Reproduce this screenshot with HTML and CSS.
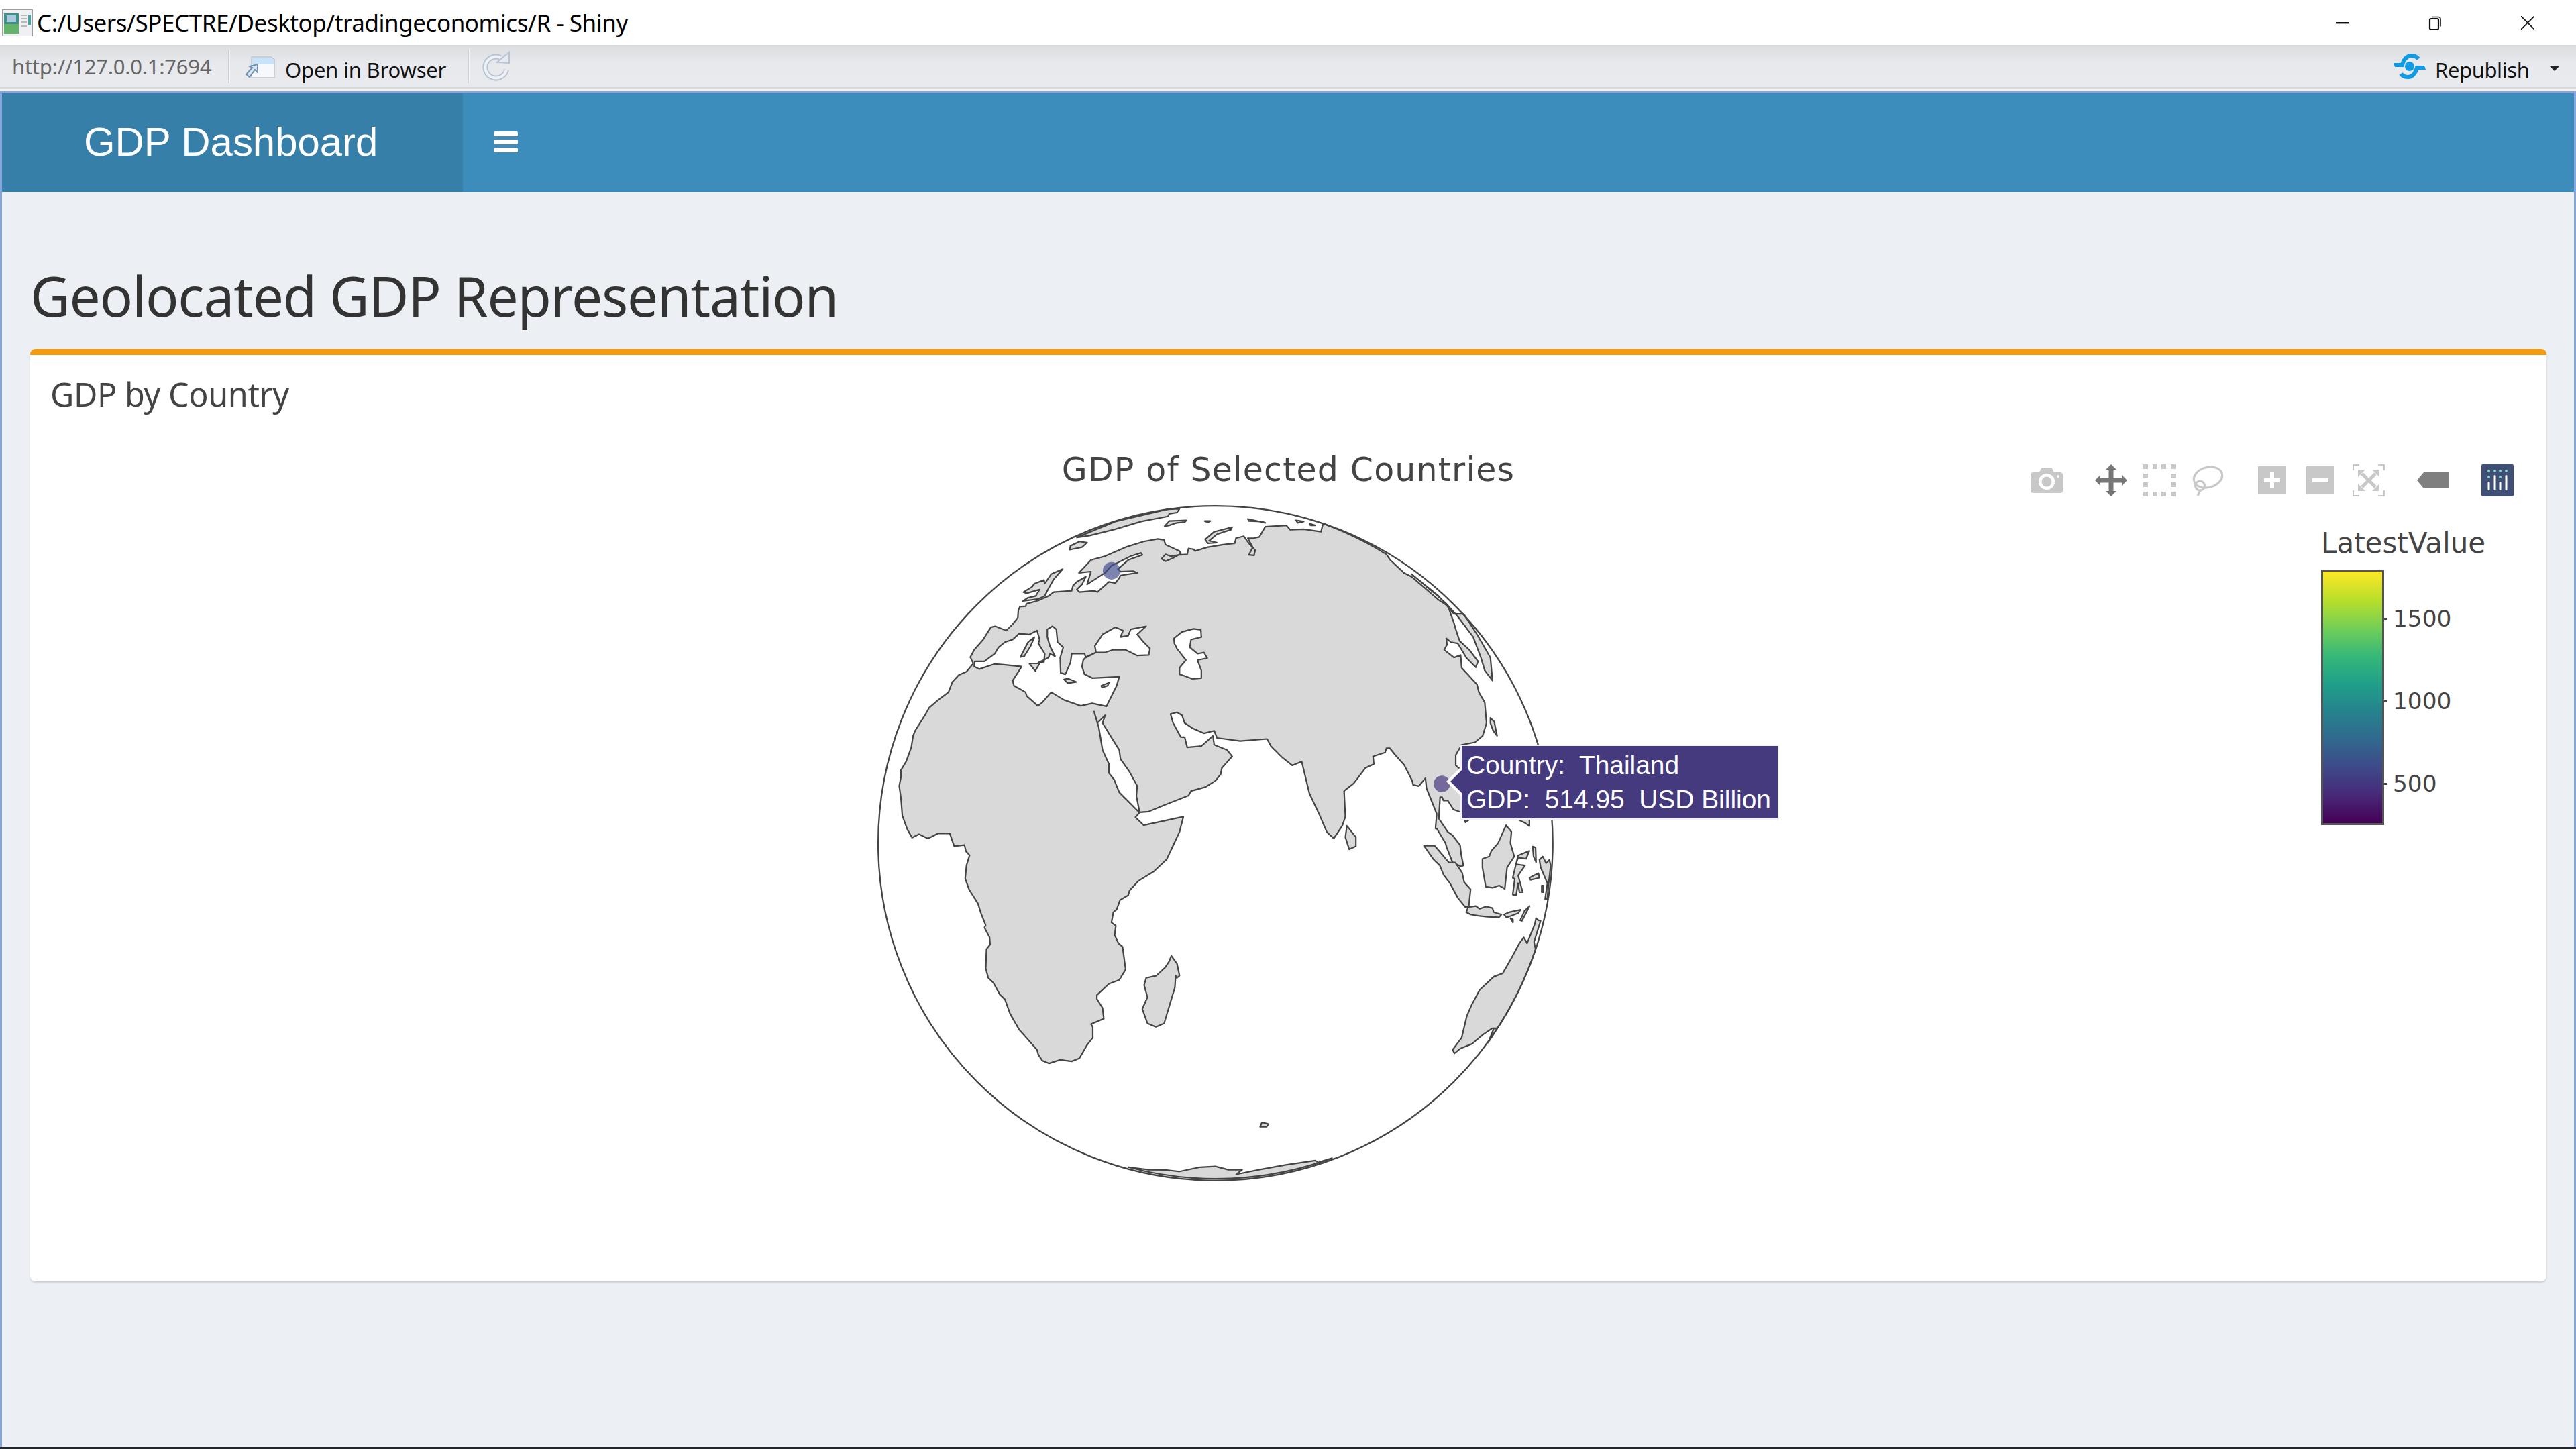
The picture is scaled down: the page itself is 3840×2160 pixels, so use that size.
FILE: index.html
```html
<!DOCTYPE html>
<html lang="en">
<head>
<meta charset="utf-8">
<title>GDP Dashboard</title>
<link rel="stylesheet" href="styles.css">
</head>
<body>
<div class="window">
  <header class="titlebar">
    <svg class="app-icon" viewBox="0 0 46 40"><rect x=".5" y=".5" width="45" height="39" fill="#eef0f2" stroke="#9a9fa5"/><rect x="3" y="6" width="22" height="30" fill="#3f8f8a"/><rect x="3" y="22" width="22" height="14" fill="#63b36b"/><rect x="7" y="9" width="14" height="10" fill="#a9c9dc"/><rect x="29" y="8" width="8" height="2" fill="#b5b8bc"/><rect x="29" y="13" width="8" height="2" fill="#b5b8bc"/><rect x="29" y="18" width="8" height="2" fill="#b5b8bc"/><rect x="29" y="24" width="8" height="2" fill="#b5b8bc"/><rect x="39" y="8" width="4" height="16" fill="#4d9fa0"/></svg>
    <span class="window-title">C:/Users/SPECTRE/Desktop/tradingeconomics/R - Shiny</span>
    <div class="window-controls">
      <svg class="wc wc-min" viewBox="0 0 20 20"><rect x="0" y="9" width="20" height="2.4" fill="#111"/></svg>
      <svg class="wc wc-restore" viewBox="0 0 22 22"><rect x="2" y="5" width="13" height="16" rx="2" fill="none" stroke="#111" stroke-width="2.2"/><path d="M6 2.5h9a3 3 0 0 1 3 3v11" fill="none" stroke="#111" stroke-width="1.6"/></svg>
      <svg class="wc wc-close" viewBox="0 0 20 20"><path d="M0 0 20 20M20 0 0 20" stroke="#111" stroke-width="1.6"/></svg>
    </div>
  </header>
  <div class="toolbar">
    <span class="url">http://127.0.0.1:7694</span>
    <span class="tool-sep"></span>
    <svg class="open-icon" viewBox="0 0 44 33"><path d="M9 1h29l5 4v27H9z" fill="#f6f8fb" stroke="#b9c3d0" stroke-width="1.5"/><path d="M10 2h28l4 4v6H10z" fill="#c9e2f7"/><path d="M6 15l12-3v12l-4-4-8 11-5-4 9-10z" fill="#d9e4f0" stroke="#6f93b3" stroke-width="2"/></svg>
    <span class="open-label">Open in Browser</span>
    <span class="tool-sep"></span>
    <svg class="refresh-icon" viewBox="0 0 42 45"><path d="M36 28a16 16 0 1 1-9-18" fill="none" stroke="#b9c4d3" stroke-width="8"/><path d="M36 28a16 16 0 1 1-9-18" fill="none" stroke="#eef2f7" stroke-width="4"/><path d="M22 17 40 18V2z" fill="#e6ebf2" stroke="#b9c4d3" stroke-width="2"/></svg>
    <div class="publish">
      <svg class="publish-icon" viewBox="0 0 48 38"><circle cx="24" cy="19" r="7" fill="#0f9be6"/><path d="M9 17h4c2-9 8-14 13-14 5 0 9 2 11 5" fill="none" stroke="#0f9be6" stroke-width="6"/><path d="M39 21h-4c-2 9-8 14-13 14-5 0-9-2-11-5" fill="none" stroke="#0f9be6" stroke-width="6"/><path d="M0 14h10v6H2zM48 24H38v-6h8z" fill="#0f9be6"/></svg>
      <span class="publish-label">Republish</span>
      <span class="caret"></span>
    </div>
  </div>
  <div class="toolbar-rule"></div>
  <div class="frame">
    <nav class="navbar">
      <div class="logo">GDP Dashboard</div>
      <div class="hamburger"><span></span><span></span><span></span></div>
    </nav>
    <main class="content">
      <h1 class="page-title">Geolocated GDP Representation</h1>
      <section class="box">
        <h3 class="box-title">GDP by Country</h3>
        <div class="plot">
          <div class="plot-title">GDP of Selected Countries</div>
          <svg class="globe" viewBox="0 0 2874.67 2770.13">
            <circle class="ocean" cx="1390" cy="1403" r="1314"/>
            <path class="land" d="M445 700L435 678 450 650 485 610 515 562 532 558 575 575 600 550 620 525 622 495 628 482 650 480 655 470 700 458 740 440 760 425 830 420 835 400 850 385 885 365 870 395 850 415 860 425 920 420 930 425 975 385 1000 390 1015 370 1020 360 1085 350 1070 343 1020 345 1010 335 1050 300 1105 280 1100 272 1060 285 1010 310 985 322 960 350 890 395 905 345 858 350 905 300 960 285 1040 250 1110 228 1165 218 1190 222 1195 240 1250 265 1255 275 1225 292 1195 305 1180 295 1195 278 1215 285 1250 280 1280 278 1285 255 1305 258 1310 265 1360 250 1420 240 1465 235 1470 215 1500 207 1520 235 1545 262 1540 282 1520 280 1535 250 1516 215 1539 215 1561 210 1584 170 1666 165 1681 182 1734 180 1801 190 1809 158A1314 1314 0 0 1 2056 278L2071 300 2124 350 2154 365 2259 455 2296 480 2319 545 2326 570 2341 615 2379 650 2413 695 2404 718 2367 680 2334 625 2307 620 2289 605 2292 630 2281 650 2319 680 2345 670 2349 720 2409 785 2416 815 2439 855 2446 935 2431 985 2401 1010 2349 1020 2326 1060 2326 1100 2349 1120 2420 1200 2420 1280 2364 1322 2355 1290 2343 1281 2317 1272 2295 1237 2278 1237 2273 1224 2265 1224 2260 1307 2295 1359 2313 1372 2343 1411 2347 1446 2356 1490 2347 1494 2313 1477 2291 1420 2286 1403 2252 1346 2247 1346 2252 1289 2212 1189 2208 1150 2182 1181 2160 1176 2156 1159 2125 1098 2090 1059 2069 1033 2056 1033 2051 1050 2004 1065 2007 1095 1974 1110 1929 1170 1891 1200 1896 1300 1884 1335 1851 1385 1824 1360 1794 1290 1756 1210 1726 1085 1689 1100 1651 1070 1606 1025 1591 997 1486 1005 1396 993 1385 965 1345 975 1300 955 1270 935 1260 905 1240 893 1215 900 1225 935 1255 990 1270 990 1280 1030 1335 1025 1380 985 1385 1020 1435 1040 1455 1065 1415 1110 1410 1135 1390 1160 1350 1185 1295 1200 1285 1218 1190 1255 1130 1280 1095 1283 1078 1302 1110 1333 1265 1300 1250 1359 1200 1466 1150 1513 1090 1550 1055 1588 1050 1606 1018 1625 1005 1662 992 1672 985 1712 1002 1725 997 1760 1012 1793 1028 1807 1040 1895 1015 1936 975 1951 928 1995 928 2010 950 2045 955 2087 905 2108 912 2119 912 2161 890 2189 860 2241 830 2253 785 2247 742 2261 715 2250 700 2227 695 2208 625 2129 590 2068 570 2012 550 1993 525 1947 505 1928 495 1891 498 1816 512 1798 510 1770 490 1732 495 1723 475 1672 465 1639 430 1583 415 1541 420 1490 432 1450 418 1435 412 1410 372 1415 355 1365 310 1365 270 1385 235 1368 208 1382 190 1350 170 1295 165 1230 158 1180 165 1145 165 1118 185 1085 205 1030 212 985 220 965 255 910 275 875 310 845 350 815 365 775 390 748 420 735 445 705Z"/>
            <path class="sea" d="M452 695L490 695 530 665 545 640 570 620 600 610 625 587 665 590 695 575 705 610 700 625 725 665 722 697 700 700 740 680 745 665 765 675 745 635 735 600 735 570 755 558 770 570 775 620 797 640 785 680 787 740 805 745 825 700 830 665 880 665 885 680 925 660 920 635 950 590 1000 562 1030 575 1020 600 1050 595 1060 570 1120 558 1085 590 1110 620 1135 645 1130 670 1085 672 1040 650 990 650 960 660 925 660 885 678 875 690 870 715 880 745 910 760 1015 755 1005 790 965 870 910 858 865 868 800 845 750 815 715 855 698 868 655 830 650 815 605 790 600 770 635 715 565 708 530 705 470 725 450 715Z"/>
            <path class="sea" d="M1095 1285L1015 1205 995 1155 975 1130 975 1095 950 1040 935 950 917 890 930 935 960 905 950 935 990 1000 1015 1040 1020 1075 1055 1125 1085 1180 1082 1220Z"/>
            <path class="sea" d="M1228 605L1260 580 1305 568 1333 572 1335 600 1295 610 1290 640 1320 665 1345 660 1358 682 1320 690 1335 730 1335 760 1300 763 1265 750 1250 745 1250 720 1275 690 1240 645 1230 625Z"/>
            <path class="land" d="M630 678L660 620 685 600 670 635 645 675ZM665 703L705 703 688 732ZM800 765L815 762 847 775 815 780ZM945 790L975 778 970 790 948 797Z"/>
            <path class="land" d="M642 425L675 405 685 392 722 378 725 392 750 355 795 335 760 375 740 410 725 440 700 452 640 460 660 447 690 440 705 415 670 425 655 430Z"/>
            <path class="land" d="M850 212L1000 150 1205 102 1250 100 1240 115 1210 120 1205 130 1100 150 1000 180 900 205ZM822 260L825 245 860 228 890 232 870 250ZM1192 168L1210 148 1278 145 1270 152 1240 155 1210 165ZM1348 148L1370 148 1360 153ZM1516 140L1584 155 1570 150 1520 148ZM1704 145L1734 150 1710 155ZM1757 158L1779 165 1760 165ZM1350 220L1385 190 1455 172 1450 182 1395 200 1365 225 1395 232 1360 235Z"/>
            <path class="land" d="M2154 355L2259 440 2319 510 2357 510 2409 590 2461 680 2469 770 2439 730 2424 680 2394 600 2334 520 2289 470 2244 430Z"/>
            <path class="land" d="M2461 915L2476 930 2487 985 2472 965 2461 935ZM2569 1311L2613 1311 2613 1337 2596 1324ZM1902 1335L1937 1380 1937 1415 1911 1427 1896 1380Z"/>
            <path class="land" d="M2202 1413L2244 1413 2299 1478 2324 1478 2351 1518 2359 1555 2384 1583 2377 1648 2364 1653 2334 1616 2304 1560 2279 1527 2264 1490 2239 1466ZM2374 1653L2404 1648 2419 1659 2444 1650 2469 1656 2474 1672 2504 1681 2494 1692 2449 1690 2414 1686 2384 1681 2367 1672ZM2522 1333L2543 1359 2539 1403 2554 1455 2526 1498 2517 1581 2495 1568 2469 1577 2443 1573 2430 1498 2430 1464 2456 1455 2465 1433 2491 1403ZM2569 1451L2613 1433 2600 1464 2569 1459 2561 1485 2596 1490 2569 1529 2587 1594 2574 1594 2569 1559 2561 1607 2548 1603 2556 1542 2548 1538ZM2626 1416L2637 1420 2639 1477 2629 1455ZM2652 1468L2665 1455 2678 1481 2691 1468 2696 1490 2687 1568 2683 1620 2674 1620 2683 1559 2657 1498ZM2613 1538L2648 1520 2652 1538 2617 1546ZM2661 1568L2667 1568 2667 1594 2661 1594ZM2514 1681L2534 1672 2579 1662 2569 1676 2524 1693ZM2539 1695L2549 1700 2549 1712ZM2614 1648L2584 1706 2577 1704 2594 1667Z"/>
            <path class="land" d="M2649 1704L2639 1695 2634 1718 2604 1793 2591 1770 2574 1793 2544 1849 2509 1910 2474 1923 2419 1975 2389 2031 2369 2077 2349 2161 2314 2208 2321 2222 2344 2203 2389 2185 2434 2147 2469 2124 2488 2124A1314 1314 0 0 0 2637 1816L2631 1788 2657 1704Z"/>
            <path class="land" d="M2474 2126L2488 2124 2452 2180Z"/>
            <path class="land" d="M1218 1842L1240 1872 1250 1919 1240 1928 1235 1919 1232 1965 1190 2105 1158 2119 1125 2105 1105 2049 1125 2003 1112 1956 1120 1928 1160 1919 1195 1886 1210 1863Z"/>
            <path class="land" d="M1564 2508L1571 2491 1597 2497 1589 2508Z"/>
            <path class="land" d="M1050 2665L1130 2675 1200 2676 1250 2682 1330 2665 1390 2662 1440 2675 1494 2675 1471 2693 1559 2675 1664 2656 1779 2639 1789 2647 1844 2630A1314 1314 0 0 1 1050 2665Z"/>
            <circle class="globe-edge" cx="1390" cy="1403" r="1314"/>
            <circle class="marker marker-se" cx="985" cy="342" r="34"/>
            <circle class="marker marker-th" cx="2272" cy="1172" r="32"/>
          </svg>
          <div class="tooltip"><div>Country:  Thailand</div><div>GDP:  514.95  USD Billion</div></div>
          <div class="modebar">
            <svg class="mb" viewBox="0 0 48 48"><path d="M4 12h9l3-6a2 2 0 0 1 2-1h12a2 2 0 0 1 2 1l3 6h9a4 4 0 0 1 4 4v23a4 4 0 0 1-4 4H4a4 4 0 0 1-4-4V16a4 4 0 0 1 4-4z" fill="#c8c8c8"/><circle cx="24" cy="26" r="12" fill="#fff"/><circle cx="24" cy="26" r="7.5" fill="#c8c8c8"/><circle cx="41" cy="18" r="2" fill="#fff"/></svg>
            <svg class="mb mb-gap" viewBox="0 0 48 48"><path d="M24 0l8 8h-4.500v12.500H40V16l8 8-8 8v-4.500H27.500V40H32l-8 8-8-8h4.500V27.500H8V32l-8-8 8-8v4.500h12.500V8H16z" fill="#777"/></svg>
            <svg class="mb" viewBox="0 0 48 48"><path d="M0 0h7v7H0zM14 0h7v7h-7zM27 0h7v7h-7zM41 0h7v7h-7zM0 14h7v7H0zM41 14h7v7h-7zM0 27h7v7H0zM41 27h7v7h-7zM0 41h7v7H0zM14 41h7v7h-7zM27 41h7v7h-7zM41 41h7v7h-7z" fill="#c8c8c8"/></svg>
            <svg class="mb" viewBox="0 0 48 48"><g fill="none" stroke="#c8c8c8" stroke-width="3.200"><ellipse cx="24.500" cy="19.500" rx="21.500" ry="15" transform="rotate(-15 24.500 19.500)"/><circle cx="12.500" cy="32" r="7"/><path d="M13 39l-4 8"/></g></svg>
            <svg class="mb mb-gap" viewBox="0 0 48 48"><path d="M3 3h42v42H3z" fill="#c8c8c8"/><path d="M21 12h6v9h9v6h-9v9h-6v-9h-9v-6h9z" fill="#fff"/></svg>
            <svg class="mb" viewBox="0 0 48 48"><path d="M3 3h42v42H3z" fill="#c8c8c8"/><path d="M12 21h24v6H12z" fill="#fff"/></svg>
            <svg class="mb" viewBox="0 0 48 48"><g fill="none" stroke="#c8c8c8"><path stroke-width="2" d="M1 9V1h9M38 1h9v8M47 39v8h-9M10 47H1v-8"/><path stroke-width="5" d="M14 14l20 20M34 14L14 34"/></g><path d="M8 8h11l-11 11zM40 8v11L29 8zM40 40H29l11-11zM8 40V29l11 11z" fill="#c8c8c8"/></svg>
            <svg class="mb mb-gap" viewBox="0 0 48 48"><path d="M0 24l10-12h38v24H10z" fill="#7f7f7f"/></svg>
            <svg class="mb mb-gap" viewBox="0 0 48 48"><rect width="48" height="48" rx="2" fill="#3f4f75"/><g fill="#7fd3c8"><circle cx="11" cy="10" r="2"/><circle cx="20" cy="10" r="2"/><circle cx="28" cy="10" r="2"/><circle cx="37" cy="10" r="2"/><circle cx="11" cy="19" r="2"/><circle cx="28" cy="19" r="2"/></g><g fill="#fff"><rect x="9.500" y="26" width="3" height="13" rx="1.500"/><rect x="18.500" y="16" width="3" height="23" rx="1.500"/><rect x="26.500" y="26" width="3" height="13" rx="1.500"/><rect x="35.500" y="16" width="3" height="23" rx="1.500"/></g></svg>
          </div>
          <div class="colorbar-title">LatestValue</div>
          <div class="colorbar"></div>
          <div class="cb-tick cb-1500"><i></i><span>1500</span></div>
          <div class="cb-tick cb-1000"><i></i><span>1000</span></div>
          <div class="cb-tick cb-500"><i></i><span>500</span></div>
        </div>
      </section>
    </main>
  </div>
</div>
</body>
</html>
```
FILE: styles.css
```css
* { box-sizing: border-box; }
html, body { margin: 0; padding: 0; }
body { width: 3840px; height: 2160px; overflow: hidden; background: #fff; }
.window { width: 3840px; height: 2160px; display: flex; flex-direction: column; border-bottom: 3px solid #23272b; }

.titlebar { height: 67px; flex: none; display: flex; align-items: center; background: #fff; padding-left: 3px; }
.app-icon { width: 46px; height: 40px; flex: none; }
.window-title { margin-left: 6px; font: 35px/1 "Noto Sans", sans-serif; letter-spacing: -.47px; color: #000; white-space: nowrap; }
.window-controls { margin-left: auto; display: flex; align-items: center; padding-right: 62px; }
.wc { display: block; flex: none; }
.wc-min { width: 20px; height: 20px; margin-right: 118px; }
.wc-restore { width: 22px; height: 22px; margin-right: 116px; }
.wc-close { width: 20px; height: 20px; }

.toolbar { height: 63px; flex: none; display: flex; align-items: center; background: linear-gradient(#dcdde1, #e8e9ed 45%, #e9eaee); padding-left: 18px; font-family: "Noto Sans", sans-serif; font-size: 31px; color: #111; }
.url { width: 300px; color: #666; letter-spacing: -.25px; white-space: nowrap; }
.tool-sep { width: 3px; height: 50px; background: #cfd0d5; border-right: 1px solid #f5f5f7; margin-left: 22px; flex: none; }
.open-icon { width: 44px; height: 33px; margin-left: 23px; margin-top: 4px; flex: none; }
.open-label { margin-left: 15px; width: 241px; margin-top: 10px; letter-spacing: -.2px; white-space: nowrap; }
.open-label + .tool-sep { margin-left: 31px; }
.refresh-icon { width: 42px; height: 45px; margin-left: 19px; flex: none; }
.publish { margin-left: auto; display: flex; align-items: center; padding-right: 24px; }
.publish-icon { width: 48px; height: 38px; flex: none; }
.publish-label { margin-left: 14px; margin-top: 10px; width: 139px; letter-spacing: -.4px; }
.caret { width: 0; height: 0; margin-left: 31px; margin-top: 6px; border-left: 8px solid transparent; border-right: 8px solid transparent; border-top: 8px solid #222; }
.toolbar-rule { height: 6px; flex: none; background: linear-gradient(#d9d9dc 50%, #f1f1f3 50%); }

.frame { flex: 1; display: flex; flex-direction: column; border: 3px solid #86a6dc; border-bottom: 0; background: #ecf0f5; min-height: 0; }
.navbar { height: 147px; flex: none; display: flex; align-items: center; background: #3c8dbc; }
.logo { width: 687px; height: 100%; display: flex; align-items: center; padding: 0 0 2px 122px; background: #367fa9; color: #fff; font: 59.900px/1 "Liberation Sans", Arial, sans-serif; white-space: nowrap; }
.hamburger { margin-left: 46px; margin-bottom: 2px; width: 36px; display: flex; flex-direction: column; gap: 5px; }
.hamburger span { height: 7px; border-radius: 2px; background: #fff; }

.content { flex: 1; padding: 0 41px 0 42px; min-height: 0; }
.page-title { margin: 0; height: 234px; padding-top: 104px; font: 400 82px/100px "Noto Sans", sans-serif; letter-spacing: -1.2px; color: #333; white-space: nowrap; }
.box { height: 1390px; border-top: 9px solid #f39c12; border-radius: 8px; background: #fff; box-shadow: 0 2px 3px rgba(0,0,0,.15); }
.box-title { margin: 0; height: 111px; padding: 28px 0 0 30px; font: 400 48.500px/60px "Noto Sans", sans-serif; letter-spacing: -.4px; color: #444; white-space: nowrap; }

.plot { position: relative; height: 1270px; font-family: "DejaVu Sans", Verdana, sans-serif; color: #444; }
.plot-title { position: absolute; left: 0; right: 0; top: 31px; text-align: center; font-size: 49px; line-height: 60px; letter-spacing: 1.150px; white-space: nowrap; }
.globe { position: absolute; left: 1235px; top: 80px; width: 1100px; height: 1060px; }
.ocean { fill: #fff; }
.land, .sea { stroke: #444; stroke-width: 5.800; stroke-linejoin: round; fill-rule: nonzero; }
.land { fill: #d9d9d9; }
.sea { fill: #fff; }
.globe-edge { fill: none; stroke: #444; stroke-width: 6; }
.marker-se { fill: rgba(62,74,137,.68); }
.marker-th { fill: rgba(70,50,126,.68); }

.tooltip { position: absolute; left: 2134px; top: 472px; width: 471px; height: 108px; padding: 4px 0 0 7px; background: #453a7e; box-shadow: 0 0 0 2px #f3f2f7; color: #fff; font: 38.900px/50.500px "Liberation Sans", Arial, sans-serif; white-space: pre; }
.tooltip::before, .tooltip::after { content: ""; position: absolute; top: 50%; clip-path: polygon(100% 0, 0 50%, 100% 100%); }
.tooltip::before { left: -23px; width: 23px; height: 46px; margin-top: -24px; background: #fff; }
.tooltip::after { left: -17px; width: 18px; height: 36px; margin-top: -19px; background: #453a7e; }

.modebar { position: absolute; left: 2982px; top: 52px; display: flex; gap: 24px; }
.mb { width: 48px; height: 48px; flex: none; display: block; }
.mb-gap { margin-left: 24px; }

.colorbar-title { position: absolute; left: 3415px; top: 140px; font-size: 42px; line-height: 60px; white-space: nowrap; }
.colorbar { position: absolute; left: 3415px; top: 209px; width: 94px; height: 381px; border: 3px solid #555; background: linear-gradient(to top, #440154, #482878 11%, #3e4989 22%, #31688e 33%, #26828e 44%, #1f9e89 55%, #35b779 66%, #6ece58 77%, #b5de2b 88%, #fde725); }
.cb-tick { position: absolute; left: 3509px; height: 40px; display: flex; align-items: center; font-size: 34.300px; line-height: 40px; }
.cb-tick i { width: 5px; height: 3px; background: #444; margin-right: 8px; }
.cb-1500 { top: 262px; }
.cb-1000 { top: 385px; }
.cb-500 { top: 508px; }
```
